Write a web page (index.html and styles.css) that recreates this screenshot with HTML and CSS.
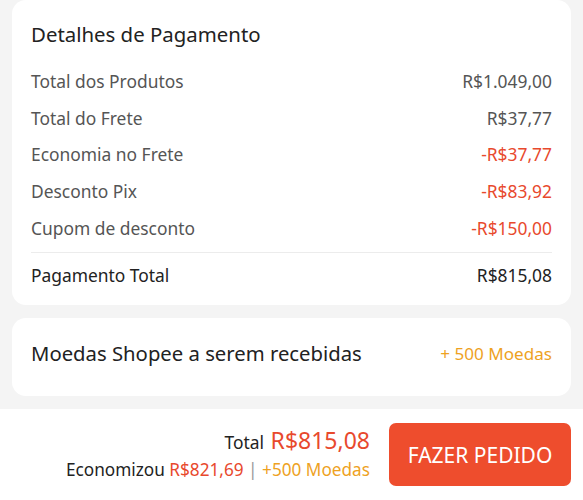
FILE: index.html
```html
<!DOCTYPE html>
<html lang="pt-BR">
<head>
  <meta charset="UTF-8">
  <title>Detalhes de Pagamento</title>
  <meta name="viewport" content="width=device-width,initial-scale=1">
  <link rel="stylesheet" href="styles.css">
</head>
<body>
  <div class="page">
    <!-- payment details -->
    <section class="card details">
      <h2>Detalhes de Pagamento</h2>
      <div class="row"><span>Total dos Produtos</span><span>R$1.049,00</span></div>
      <div class="row"><span>Total do Frete</span><span>R$37,77</span></div>
      <div class="row"><span>Economia no Frete</span><span class="neg">-R$37,77</span></div>
      <div class="row"><span>Desconto Pix</span><span class="neg">-R$83,92</span></div>
      <div class="row"><span>Cupom de desconto</span><span class="neg">-R$150,00</span></div>
      <hr>
      <div class="row total"><span>Pagamento Total</span><span>R$815,08</span></div>
    </section>

    <!-- coins -->
    <section class="card coins">
      <span>Moedas Shopee a serem recebidas</span>
      <span class="gold">+ 500 Moedas</span>
    </section>
  </div>

  <!-- bottom bar -->
  <footer class="bar">
    <div class="sum">
      <div class="sum-total">Total <b>R$815,08</b></div>
      <div class="sum-save">Economizou <span class="neg">R$821,69</span> <i>|</i> <span class="gold">+500 Moedas</span></div>
    </div>
    <button class="order">FAZER PEDIDO</button>
  </footer>
</body>
</html>
```

FILE: styles.css
```css
*{box-sizing:border-box}
html,body{margin:0;height:100%}
body{
  font-family:"Noto Sans","Open Sans",Arial,sans-serif;background:#f4f4f4;color:#222;
  display:flex;flex-direction:column;overflow:hidden
}
.page{flex:1;padding:0 12px}
.card{background:#fff;border-radius:14px}
.neg{color:#e8492d}
.gold{color:#eea21f}

/* details card */
.details{padding:20px 19px 11px;margin-bottom:13px}
.details h2{margin:0 0 15px;font-size:20.4px;font-weight:400;line-height:28px;color:#222}
.row{display:flex;justify-content:space-between;font-size:17.4px;line-height:36.7px;color:#555}
.details hr{border:none;border-top:1px solid #ececec;margin:5px 0 4px}
.row.total{color:#222;line-height:37px}

/* coins card */
.coins{display:flex;justify-content:space-between;align-items:center;padding:0 19px 7px;height:78px}
.coins span:first-child{font-size:20.3px;color:#222}
.coins .gold{font-size:17.1px}

/* bottom bar */
.bar{height:91px;background:#fff;display:flex;align-items:center;justify-content:flex-end;padding:0 12px 0 0;gap:19px}
.sum{text-align:right;padding-top:1px}
.sum-total{font-size:17.4px;line-height:27px}
.sum-total b{font-weight:400;font-size:23px;color:#e8492d;margin-left:2px}
.sum-save{font-size:17.2px;line-height:27px}
.sum-save i{font-style:normal;color:#999}
.order{
  width:182px;height:63px;border:none;border-radius:7px;background:#ee4d2d;color:#fff;
  font:inherit;font-size:21px;cursor:pointer
}
```
